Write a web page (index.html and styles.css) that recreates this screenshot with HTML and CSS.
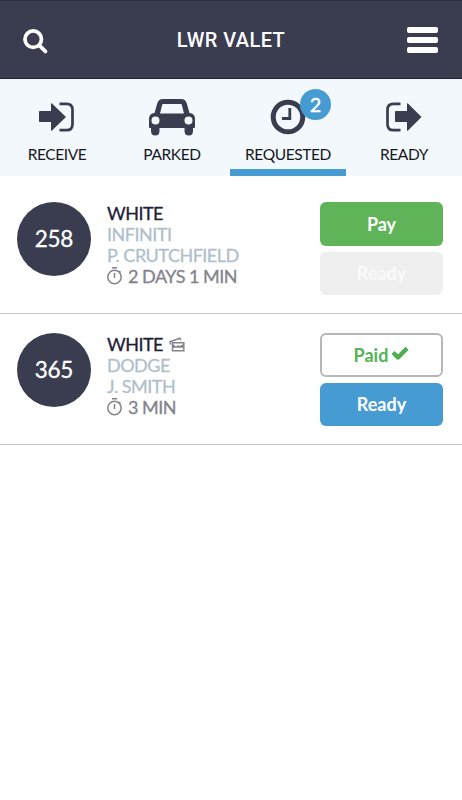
FILE: index.html
```html
<!DOCTYPE html>
<html lang="en">
<head>
<meta charset="utf-8">
<title>LWR Valet</title>
<link rel="stylesheet" href="styles.css">
</head>
<body>
<header class="topbar">
  <svg class="search" viewBox="0 0 24 24"><circle cx="9.8" cy="9.8" r="7.9"/><path d="M15.700 15.700l5.800 5.800"/></svg>
  <h1>LWR VALET</h1>
  <div class="menu"><i></i><i></i><i></i></div>
</header>
<nav class="tabs">
  <div class="tab">
    <svg width="36" height="36" viewBox="0 0 36 36"><path class="fill" d="M.8 12H12V5q0-1.400 1-.5L27 18 13 31.500q-1 .9-1-.5V23H.800Q0 23 0 22V13q0-1 .8-1z"/><path class="line" d="M20.500 4.800h7q6 0 6 6v14.400q0 6-6 6h-7"/></svg>
    <span class="tab-label">RECEIVE</span>
  </div>
  <div class="tab">
    <svg width="48" height="36" viewBox="0 0 48 36"><path class="fill" fill-rule="evenodd" d="M15 0h18q4.500 0 5.700 4.300L41.500 14q5.500.4 5.500 6v8q0 1-1 1h-1v3q0 4.500-4.200 4.500T36.500 32v-3h-25v3q0 4.500-4.200 4.500T3 32v-3H2q-1 0-1-1v-8q0-5.600 5.500-6L9.300 4.300Q10.500 0 15 0zM15.200 5q-.8 0-1 .8L12 14.500h24l-2.200-8.700q-.2-.8-1-.8zM7.500 17.500a4 4 0 1 0 0 8 4 4 0 0 0 0-8zM40.500 17.500a4 4 0 1 0 0 8 4 4 0 0 0 0-8z"/></svg>
    <span class="tab-label">PARKED</span>
  </div>
  <div class="tab active">
    <svg width="36" height="36" viewBox="0 0 36 36"><circle class="face" cx="18" cy="18" r="14.800"/><path class="hands" d="M19.800 9v10.500H12"/></svg>
    <span class="badge">2</span>
    <span class="tab-label">REQUESTED</span>
  </div>
  <div class="tab">
    <svg width="36" height="36" viewBox="0 0 36 36"><path class="line" d="M14.500 4.800h-7q-6 0-6 6v14.400q0 6 6 6h7"/><path class="fill" d="M9.800 12H21V5q0-1.400 1-.5L35.500 18 22 31.500q-1 .9-1-.5V23H9.800Q9 23 9 22V13q0-1 .8-1z"/></svg>
    <span class="tab-label">READY</span>
  </div>
</nav>
<main>
  <section class="row">
    <div class="ticket">258</div>
    <div class="info">
      <div class="color">WHITE</div>
      <div class="sub">INFINITI</div>
      <div class="sub">P. CRUTCHFIELD</div>
      <div class="time"><svg class="watch" viewBox="0 0 16 18"><circle cx="7.500" cy="10" r="6.700"/><path d="M5 .8h5M7.500 6v5M12 4l1.500 1.500"/></svg>2 DAYS 1 MIN</div>
    </div>
    <div class="actions">
      <button class="btn pay">Pay</button>
      <button class="btn off">Ready</button>
    </div>
  </section>
  <section class="row">
    <div class="ticket">365</div>
    <div class="info">
      <div class="color">WHITE<svg class="photos" viewBox="0 0 16 15"><path d="M1.600 7.500L1 4.800 10.800 1.200l1 2"/><path d="M3.500 5.700h11.300v8H3.500z"/><path class="hill" d="M4 10.800V7l3 2.500 2-1.500 1.500 1L14.500 7v3.800z"/></svg></div>
      <div class="sub">DODGE</div>
      <div class="sub">J. SMITH</div>
      <div class="time"><svg class="watch" viewBox="0 0 16 18"><circle cx="7.500" cy="10" r="6.700"/><path d="M5 .8h5M7.500 6v5M12 4l1.500 1.500"/></svg>3 MIN</div>
    </div>
    <div class="actions">
      <button class="btn paid">Paid<svg class="check" viewBox="0 0 18 14"><path d="M2 6.500l5 4.900L16 2.300"/></svg></button>
      <button class="btn ready">Ready</button>
    </div>
  </section>
</main>
</body>
</html>
```

FILE: styles.css
```css
* { box-sizing: border-box; }
body {
  margin: 0;
  background: #fff;
  font-family: Lato, "Liberation Sans", sans-serif;
}
.topbar {
  display: grid;
  grid-template-columns: 40px 1fr 40px;
  align-items: center;
  height: 79px;
  padding: 1px 15px 0 23px;
  background: #3a3d50;
  border-top: 1px solid #2b2e3c;
  border-bottom: 1px solid #1d2037;
}
.search { width: 25px; height: 25px; margin-top: 2px; fill: none; stroke: #fff; stroke-width: 3.600; stroke-linecap: round; }
.topbar h1 {
  margin: 0 8px 0 0;
  text-align: center;
  color: #fff;
  font: 500 20px/24px Roboto, sans-serif;
  letter-spacing: 0.4px;
}
.menu { display: flex; flex-direction: column; gap: 4px; width: 31px; justify-self: start; }
.menu i { height: 6px; border-radius: 2px; background: #fff; }
.tabs { display: flex; height: 97px; background: #f2f8fc; }
.tab {
  position: relative;
  width: 116px;
  flex: none;
  display: flex;
  flex-direction: column;
  align-items: center;
  padding-top: 20px;
}
.tab:first-child { width: 114px; }
.tab.active { border-bottom: 7px solid #469bd2; }
.tab svg { overflow: visible; }
.fill { fill: #3a3d50; }
.line { fill: none; stroke: #3a3d50; stroke-width: 2.700; }
.face { fill: none; stroke: #3a3d50; stroke-width: 5; }
.hands { fill: none; stroke: #3a3d50; stroke-width: 2.800; }
.tab-label { margin-top: 9px; font-size: 15.500px; line-height: 20px; letter-spacing: -0.400px; color: #16171c; }
.badge {
  position: absolute;
  left: 70px;
  top: 10px;
  width: 31px;
  height: 31px;
  border-radius: 50%;
  background: #469bd2;
  color: #fff;
  font: 500 20px/30px Lato, sans-serif;
  -webkit-text-stroke: 0.300px #fff;
  text-align: center;
}
main { padding-top: 7px; }
.row {
  display: flex;
  align-items: flex-start;
  height: 131px;
  padding: 19px 19px 0 17px;
  border-bottom: 1px solid #c4c7cc;
}
.ticket {
  width: 74px;
  height: 74px;
  border-radius: 50%;
  background: #3a3d50;
  color: #fff;
  font-size: 22.500px;
  -webkit-text-stroke: 0.300px #fff;
  letter-spacing: -0.300px;
  line-height: 74px;
  text-align: center;
}
.info { flex: 1; margin-left: 16px; padding-top: 0.500px; font-size: 18px; line-height: 21px; letter-spacing: -0.500px; -webkit-text-stroke: 0.300px; }
.color { color: #1d2037; }
.sub { color: #b0bfcc; }
.time { color: #84838b; display: flex; align-items: center; }
.watch { width: 16px; height: 18px; margin-right: 5px; fill: none; stroke: #84838b; stroke-width: 1.500; }
.photos { width: 16px; height: 15px; margin-left: 6px; vertical-align: -1px; fill: #fff; stroke: #84838b; stroke-width: 1.500; }
.photos .hill { fill: #84838b; stroke: none; }
.actions { width: 123px; display: flex; flex-direction: column; gap: 6px; }
.btn {
  display: flex;
  align-items: center;
  justify-content: center;
  height: 43.500px;
  padding: 0;
  border: 0;
  border-radius: 6px;
  color: #fff;
  font: 700 18px/22px Lato, sans-serif;
}
.pay { background: #5fb358; }
.off { background: #efefef; color: #fafafa; }
.paid { background: #fff; border: 2px solid #b7b7b7; color: #55b255; }
.ready { background: #469bd2; }
.check { width: 18px; height: 14px; margin: -3px 0 0 3px; fill: none; stroke: #4cae50; stroke-width: 4.300; stroke-linejoin: round; }
```
